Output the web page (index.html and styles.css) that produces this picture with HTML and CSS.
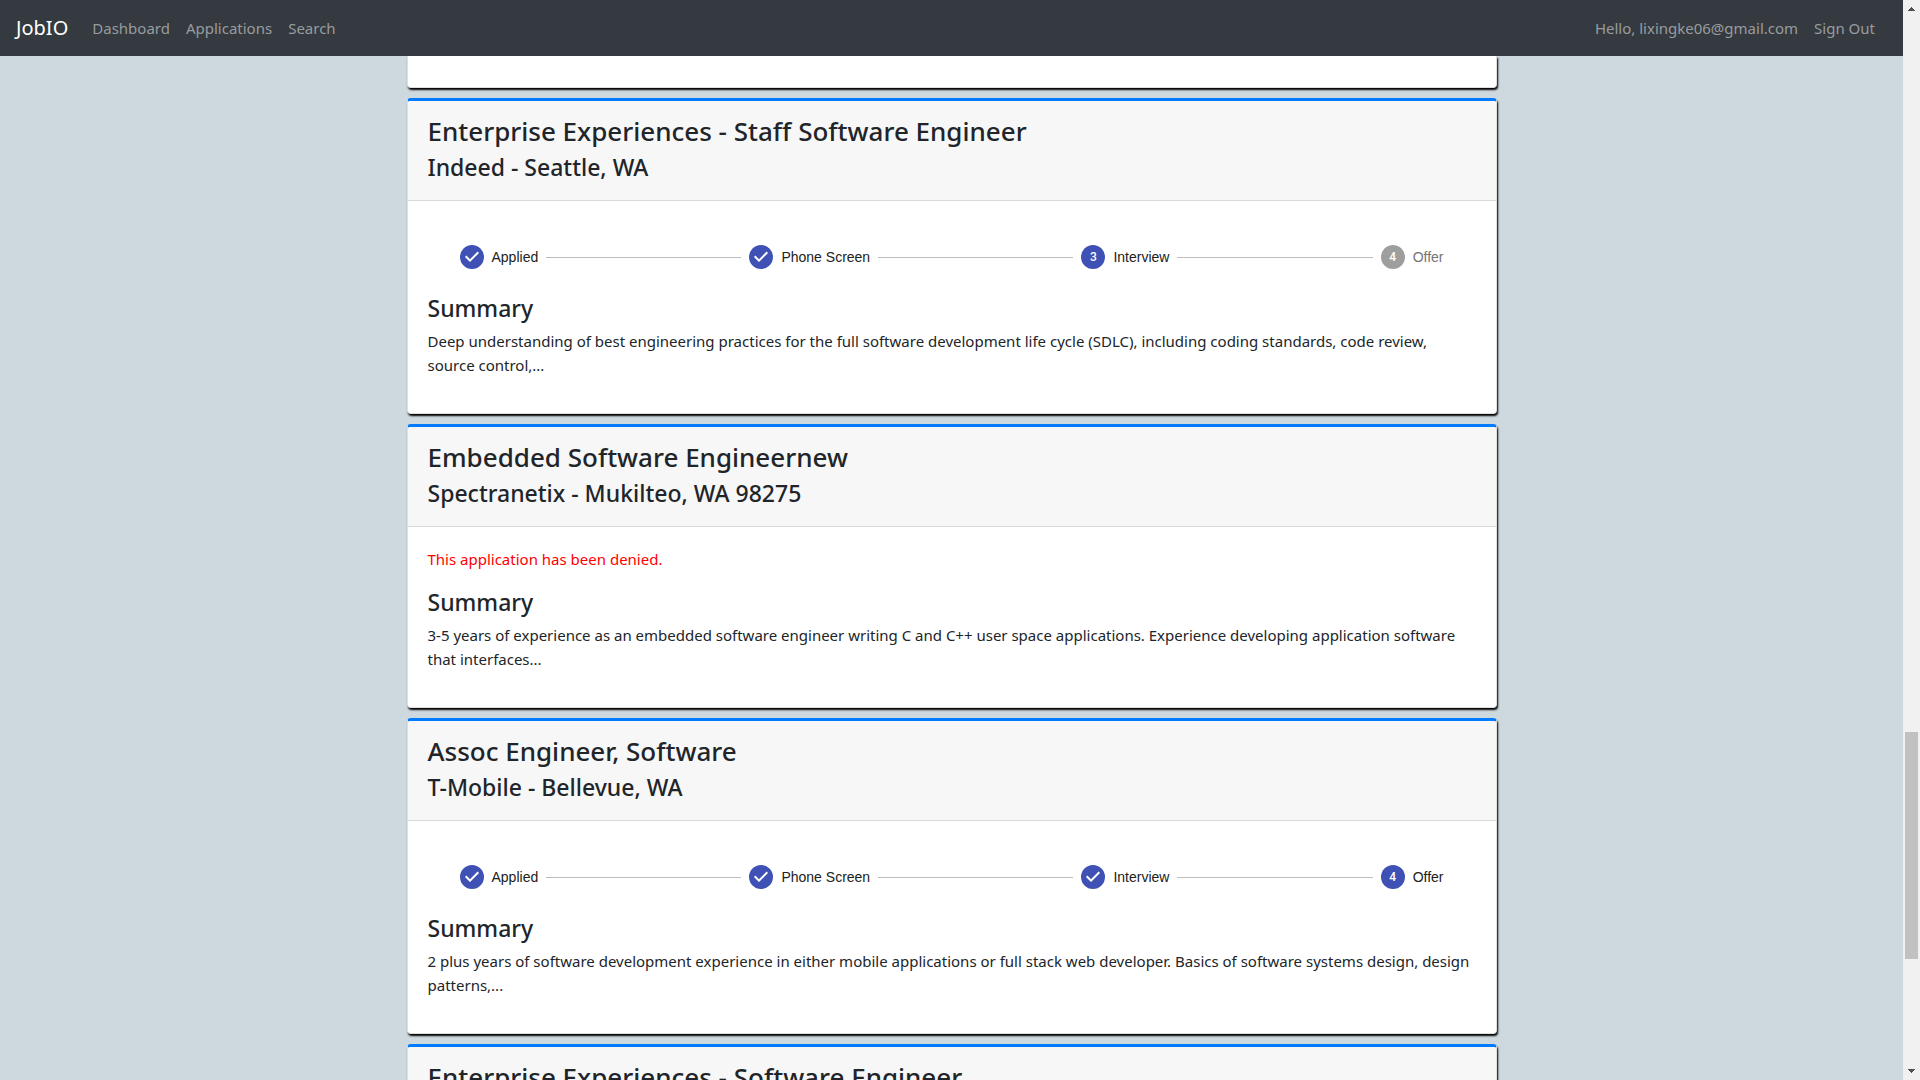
FILE: index.html
```
<!DOCTYPE html>
<html lang="en">
<head>
<meta charset="utf-8">
<meta name="viewport" content="width=device-width, initial-scale=1">
<title>JobIO</title>
<link rel="stylesheet" href="styles.css">
</head>
<body>
<svg class="sprite" aria-hidden="true">
  <symbol id="check" viewBox="0 0 24 24"><path d="M12 0a12 12 0 1 0 0 24 12 12 0 0 0 0-24zm-2 17l-5-5 1.4-1.4 3.6 3.6 7.6-7.6L19 8l-9 9z"/></symbol>
</svg>
<div class="app">
  <div class="page">
    <nav class="navbar">
      <a class="brand" href="#">JobIO</a>
      <div class="nav-links">
        <a href="#">Dashboard</a>
        <a href="#">Applications</a>
        <a href="#">Search</a>
      </div>
      <div class="nav-links nav-user">
        <a href="#">Hello, lixingke06@gmail.com</a>
        <a href="#">Sign Out</a>
      </div>
    </nav>
    <main class="content">
      <div class="list">
        <article class="card card-tail"></article>

        <article class="card">
          <header class="card-header">
            <h3>Enterprise Experiences - Staff Software Engineer</h3>
            <h4>Indeed - Seattle, WA</h4>
          </header>
          <div class="card-body">
            <ol class="stepper">
              <li class="step"><svg class="step-icon"><use href="#check"/></svg>Applied</li>
              <li class="connector" role="presentation"></li>
              <li class="step"><svg class="step-icon"><use href="#check"/></svg>Phone Screen</li>
              <li class="connector" role="presentation"></li>
              <li class="step"><span class="step-number">3</span>Interview</li>
              <li class="connector" role="presentation"></li>
              <li class="step step-pending"><span class="step-number">4</span>Offer</li>
            </ol>
            <h4>Summary</h4>
            <p>Deep understanding of best engineering practices for the full software development life cycle (SDLC), including coding standards, code review, source control,...</p>
          </div>
        </article>

        <article class="card">
          <header class="card-header">
            <h3>Embedded Software Engineernew</h3>
            <h4>Spectranetix - Mukilteo, WA 98275</h4>
          </header>
          <div class="card-body">
            <p class="denied">This application has been denied.</p>
            <h4>Summary</h4>
            <p>3-5 years of experience as an embedded software engineer writing C and C++ user space applications. Experience developing application software that interfaces...</p>
          </div>
        </article>

        <article class="card">
          <header class="card-header">
            <h3>Assoc Engineer, Software</h3>
            <h4>T-Mobile - Bellevue, WA</h4>
          </header>
          <div class="card-body">
            <ol class="stepper">
              <li class="step"><svg class="step-icon"><use href="#check"/></svg>Applied</li>
              <li class="connector" role="presentation"></li>
              <li class="step"><svg class="step-icon"><use href="#check"/></svg>Phone Screen</li>
              <li class="connector" role="presentation"></li>
              <li class="step"><svg class="step-icon"><use href="#check"/></svg>Interview</li>
              <li class="connector" role="presentation"></li>
              <li class="step"><span class="step-number">4</span>Offer</li>
            </ol>
            <h4>Summary</h4>
            <p>2 plus years of software development experience in either mobile applications or full stack web developer. Basics of software systems design, design patterns,...</p>
          </div>
        </article>

        <article class="card">
          <header class="card-header">
            <h3>Enterprise Experiences - Software Engineer</h3>
          </header>
        </article>
      </div>
    </main>
  </div>
  <div class="scrollbar" aria-hidden="true">
    <svg class="arrow" viewBox="0 0 17 17"><path d="M5 11h7v-1h-1v-1h-1v-1h-1v-1h-1v1h-1v1h-1v1h-1z"/></svg>
    <div class="track"><div class="thumb"></div></div>
    <svg class="arrow" viewBox="0 0 17 17"><path d="M5 6h7v1h-1v1h-1v1h-1v1h-1v-1h-1v-1h-1v-1h-1z"/></svg>
  </div>
</div>
</body>
</html>
```
FILE: styles.css
```
* { box-sizing: border-box; }

body {
  margin: 0;
  font: 15px/24px "Noto Sans", "Open Sans", sans-serif;
  color: #212529;
}

h3, h4, p, ol { margin: 0; padding: 0; }
h3, h4 { font-weight: 500; }
h3 { font-size: 26px; line-height: 34px; }
h4 { font-size: 23px; line-height: 30px; }

.sprite { display: none; }

.app {
  display: flex;
  height: 100vh;
  overflow: hidden;
}

.page {
  flex: 1;
  display: flex;
  flex-direction: column;
  min-width: 0;
  background: #ced9df;
}

.navbar {
  display: flex;
  flex: none;
  align-items: center;
  gap: 24px;
  height: 56px;
  padding: 0 28px 0 16px;
  background: #343a40;
}

.navbar a { text-decoration: none; color: #999c9f; }
.navbar .brand { font-size: 20px; color: #fff; }
.nav-links { display: flex; gap: 16px; }
.nav-user { margin-left: auto; }

.content {
  flex: 1;
  min-height: 0;
  overflow: hidden;
}

.list {
  display: flex;
  flex-direction: column;
  gap: 10px;
  max-width: 1110px;
  margin: 0 auto;
  padding: 0 10px;
}

.card {
  flex: none;
  border: 1px solid #dfdfdf;
  border-top: 3px solid #007bff;
  border-radius: 4px;
  background: #fff;
  box-shadow: 1px 2px 2px #000;
}

.card-tail {
  height: 32px;
  border-top: 0;
  border-radius: 0 0 4px 4px;
}

.card-header {
  display: grid;
  gap: 4px;
  padding: 13px 20px 18px;
  border-bottom: 1px solid #d9d9d9;
  border-radius: 3px 3px 0 0;
  background: #f7f7f7;
}

.card-body { padding: 20px 20px 36px; }
.card-body h4 { margin-bottom: 6px; }
.denied { margin-bottom: 16px; color: #f00; }

.stepper {
  display: flex;
  align-items: center;
  gap: 8px;
  padding: 24px 32px;
  list-style: none;
  font: 14px/20px "Liberation Sans", Arial, sans-serif;
  color: #212121;
}

.step { display: flex; align-items: center; gap: 8px; height: 24px; }
.step-pending { color: #757575; }
.step-icon { width: 24px; height: 24px; fill: #3f51b5; }

.step-number {
  width: 24px;
  border-radius: 50%;
  background: #3f51b5;
  color: #fff;
  font: 500 12px/24px Roboto, sans-serif;
  text-align: center;
}

.step-pending .step-number { background: #9e9e9e; }
.connector { flex: 1; height: 1px; background: #bdbdbd; }

.scrollbar {
  flex: none;
  display: flex;
  flex-direction: column;
  width: 17px;
  background: #f1f1f1;
}

.arrow { width: 17px; height: 17px; fill: #505050; }

.track {
  flex: 1;
  display: grid;
  grid-template-rows: 715fr 227fr 104fr;
  padding: 0 2px;
}

.thumb { grid-row: 2; background: #c1c1c1; }
```
